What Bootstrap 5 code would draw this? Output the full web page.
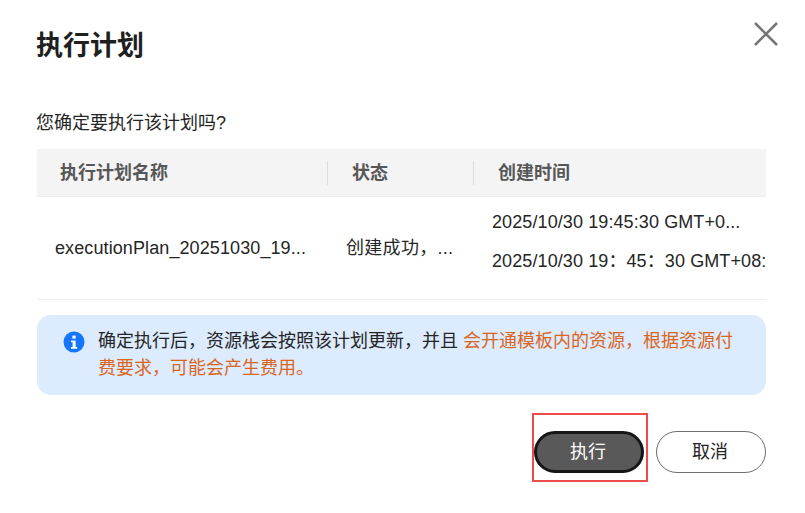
<!DOCTYPE html>
<html lang="zh-CN">
<head>
    <meta charset="UTF-8">
    <meta name="viewport" content="width=device-width,initial-scale=1">
    <title>执行计划</title>
    <link rel="stylesheet" href="https://cdn.jsdelivr.net/npm/bootstrap@5.3.3/dist/css/bootstrap.min.css">
    <style>
        html, body { height: 100%; overflow: hidden; }
        body { font-family: "Liberation Sans", "Noto Sans CJK SC", sans-serif; font-size: 16px; color: #252b3a; background: #fff; }
        .plan-dialog { width: 805px; height: 513px; padding: 29px 39px 0 37px; position: relative; }
        .plan-title { font-size: 27px; line-height: 34px; font-weight: 700; color: #1f1f1f; margin: 0 0 47px -1px; }
        .plan-close { position: absolute; top: 21px; left: 754px; width: 24px; height: 24px; padding: 0; border: 0; background: none; }
        .plan-ask { font-size: 18px; line-height: 26px; height: 26px; color: #252525; margin: 0 0 13px -1px; }
        .plan-head { height: 48px; background: #f4f4f4; border-bottom: 1px solid #eee; font-size: 18px; font-weight: 700; color: #575757; }
        .plan-head > div { height: 100%; display: flex; align-items: center; }
        .plan-head .head-cell { height: 24px; line-height: 24px; border-left: 1px solid #ddd; padding-left: 24px; }
        .plan-head .head-first { height: 24px; line-height: 24px; padding-left: 23px; }
        .col-name { width: 290px; flex: none; }
        .col-state { width: 146px; flex: none; }
        .col-time { flex: 1 1 0; min-width: 0; }
        .plan-row { height: 103px; border-bottom: 1px solid #eee; font-size: 18px; color: #252525; letter-spacing: .1px; }
        .plan-row .col-name { padding-left: 18px; }
        .plan-row .col-state { padding-left: 19px; letter-spacing: .3px; }
        .plan-row .col-time { padding-left: 19px; padding-bottom: 13px; }
        .plain-line { white-space: nowrap; }
        .time-line { white-space: nowrap; line-height: 26px; }
        .time-line + .time-line { margin-top: 13px; }
        .plan-tip { margin-top: 15px; height: 80px; background: #dcebfe; border-radius: 14px; padding: 12px 26px; font-size: 18px; line-height: 27px; color: #252525; }
        .plan-tip svg { flex: none; margin-top: 4px; margin-right: 13px; }
        .tip-body { margin-top: 1px; }
        .tip-warn { color: #d9661f; }
        .plan-foot { margin-top: 36px; gap: 8px; }
        .run-mark { border: 2px solid #ee4b4b; padding: 16px 0 0; width: 116px; height: 69px; margin-top: -18px; }
        .run-mark .btn { width: 110px; height: 42px; border: 3px solid #161616; background: #595959; color: #fff; }
        .plan-foot .btn { border-radius: 21px; font-size: 18px; line-height: 24px; padding: 0 2px 0 0; }
        .cancel-btn { width: 110px; height: 42px; border: 1px solid #6e6e6e; background: #fff; color: #252525; }
    </style>
</head>
<body>
<div class="plan-dialog">
    <h1 class="plan-title">执行计划</h1>
    <button class="plan-close" type="button" aria-label="关闭">
        <svg width="24" height="24" viewBox="0 0 24 24" fill="none" stroke="#767676" stroke-width="2.6"><path d="M1 1 23 23M23 1 1 23"/></svg>
    </button>
    <div class="plan-ask">您确定要执行该计划吗?</div>

    <div class="plan-head d-flex">
        <div class="col-name"><div class="head-first">执行计划名称</div></div>
        <div class="col-state"><div class="head-cell">状态</div></div>
        <div class="col-time"><div class="head-cell">创建时间</div></div>
    </div>
    <div class="plan-row d-flex align-items-center">
        <div class="col-name plain-line">executionPlan_20251030_19...</div>
        <div class="col-state plain-line">创建成功，...</div>
        <div class="col-time">
            <div class="time-line">2025/10/30 19:45:30 GMT+0...</div>
            <div class="time-line">2025/10/30 19：45：30 GMT+08:</div>
        </div>
    </div>

    <div class="plan-tip d-flex">
        <svg width="22" height="22" viewBox="0 0 22 22"><circle cx="11" cy="11" r="10.5" fill="#1476ff"/><rect x="9.4" y="4.6" width="3.2" height="3" fill="#fff"/><path d="M8 9.4h4.6v6.6H14.200v1.800H8V16h1.600v-4.800H8z" fill="#fff"/></svg>
        <div class="tip-body">确定执行后，资源栈会按照该计划更新，并且 <span class="tip-warn">会开通模板内的资源，根据资源付</span><br><span class="tip-warn">费要求，可能会产生费用。</span></div>
    </div>

    <div class="plan-foot d-flex justify-content-end">
        <div class="run-mark"><button type="button" class="btn">执行</button></div>
        <button type="button" class="btn cancel-btn">取消</button>
    </div>
</div>
<script src="https://cdn.jsdelivr.net/npm/bootstrap@5.3.3/dist/js/bootstrap.bundle.min.js"></script>
</body>
</html>
